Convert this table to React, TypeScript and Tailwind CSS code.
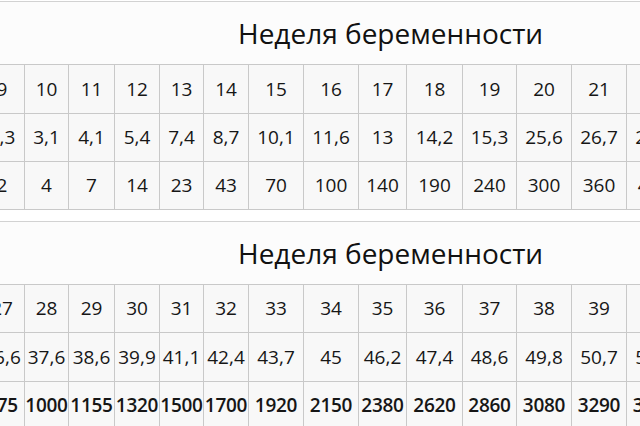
const WIDTHS = [45, 44, 46, 45, 44, 45, 55, 55, 48, 56, 54, 55, 55, 55];

type Block = {
  weeks: string[];
  length: string[];
  weight: string[];
  boldWeight?: boolean;
  rowHeights: [string, string, string];
};

const BLOCKS: Block[] = [
  {
    weeks: ["9", "10", "11", "12", "13", "14", "15", "16", "17", "18", "19", "20", "21", "22"],
    length: ["2,3", "3,1", "4,1", "5,4", "7,4", "8,7", "10,1", "11,6", "13", "14,2", "15,3", "25,6", "26,7", "27,8"],
    weight: ["2", "4", "7", "14", "23", "43", "70", "100", "140", "190", "240", "300", "360", "430"],
    rowHeights: ["h-[49px]", "h-[48px]", "h-[48px]"],
  },
  {
    weeks: ["27", "28", "29", "30", "31", "32", "33", "34", "35", "36", "37", "38", "39", "40"],
    length: ["36,6", "37,6", "38,6", "39,9", "41,1", "42,4", "43,7", "45", "46,2", "47,4", "48,6", "49,8", "50,7", "51,2"],
    weight: ["875", "1000", "1155", "1320", "1500", "1700", "1920", "2150", "2380", "2620", "2860", "3080", "3290", "3462"],
    boldWeight: true,
    rowHeights: ["h-[48px]", "h-[49px]", "h-[48px]"],
  },
];

function Row({
  values,
  height,
  bold,
}: {
  values: string[];
  height: string;
  bold?: boolean;
}) {
  return (
    <div className={`flex border-b border-[#c9c9c9] ${height}`}>
      {values.map((value, i) => (
        <div
          key={i}
          style={{ width: WIDTHS[i] }}
          className={`flex shrink-0 items-center justify-center overflow-hidden whitespace-nowrap border-r border-[#c9c9c9] bg-[#f8f8f8] text-[19px] leading-none text-[#161616] ${
            bold ? "font-semibold tracking-[-0.3px]" : ""
          }`}
        >
          {value}
        </div>
      ))}
    </div>
  );
}

function WeekTable({ block }: { block: Block }) {
  return (
    <section className="border-t border-[#d2d2d2] bg-[#fcfcfc]">
      <div className="flex h-[62px] items-center pl-[238px] text-[28px] leading-none text-[#111]">
        Неделя беременности
      </div>
      <div className="ml-[-20px] border-t border-[#c9c9c9]">
        <Row values={block.weeks} height={block.rowHeights[0]} />
        <Row values={block.length} height={block.rowHeights[1]} />
        <Row
          values={block.weight}
          height={block.rowHeights[2]}
          bold={block.boldWeight}
        />
      </div>
    </section>
  );
}

export default function App() {
  return (
    <div
      className="h-[426px] w-[640px] overflow-hidden bg-white pt-[1px]"
      style={{ fontFamily: '"Open Sans", "Noto Sans", sans-serif' }}
    >
      <WeekTable block={BLOCKS[0]} />
      <div className="h-[11px]" />
      <WeekTable block={BLOCKS[1]} />
    </div>
  );
}
